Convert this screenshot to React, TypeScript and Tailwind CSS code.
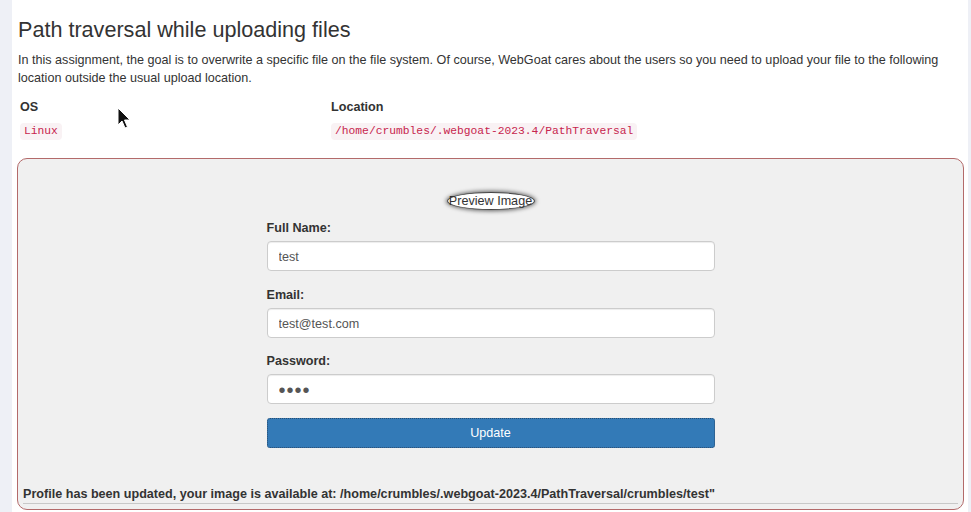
import React from "react";

export default function App() {
  const font = { fontFamily: '"Liberation Sans", Arial, sans-serif' };
  return (
    <div className="relative flex w-[971px] h-[512px] overflow-hidden text-[#333]" style={font}>
      <div className="w-[12px] bg-[#eef0f6] shrink-0" />
      <div className="flex-1 bg-white pl-[5px] pr-[4px] pt-[18px] flex flex-col">
        <h3 className="pl-[1px] text-[21.6px] leading-[24px] font-normal">Path traversal while uploading files</h3>
        <p className="pl-[1px] mt-[9px] text-[12.6px] leading-[18px] pr-[6px]">
          In this assignment, the goal is to overwrite a specific file on the file system. Of course, WebGoat cares about the users so you need to upload your file to the following location outside the usual upload location.
        </p>
        <div className="mt-[10px] pl-[3px] flex text-[12.6px]">
          <div className="w-[311px] flex flex-col">
            <div className="font-bold leading-[20px]">OS</div>
            <div className="mt-[4px] h-[20px] flex items-center">
              <code className="bg-[#f9f2f4] text-[#c7254e] rounded-[4px] px-[4px] py-[1px] text-[11.3px] leading-[15px]" style={{ fontFamily: '"Liberation Mono", monospace' }}>Linux</code>
            </div>
          </div>
          <div className="flex flex-col">
            <div className="font-bold leading-[20px]">Location</div>
            <div className="mt-[4px] h-[20px] flex items-center">
              <code className="bg-[#f9f2f4] text-[#c7254e] rounded-[4px] px-[4px] py-[1px] text-[11.3px] leading-[15px]" style={{ fontFamily: '"Liberation Mono", monospace' }}>/home/crumbles/.webgoat-2023.4/PathTraversal</code>
            </div>
          </div>
        </div>
        <div className="mt-[17px] h-[352px] border border-[#b36a6a] rounded-[10px] bg-[#f0f0f0] px-[5px] flex flex-col">
          <div className="flex justify-center mt-[33px]">
            <div className="w-[88px] h-[18px] rounded-[50%] bg-white border border-[#444] shadow-[0_0_4px_1px_rgba(0,0,0,0.6)] flex items-center justify-center text-[12.6px] leading-[16px] text-[#333]">
              Preview Image
            </div>
          </div>
          <div className="w-[448px] mx-auto mt-[9px] flex flex-col">
            <label className="text-[12.6px] font-bold leading-[19px] mb-[3px]">Full Name:</label>
            <input readOnly value="test" className="h-[30px] bg-white border border-[#ccc] rounded-[4px] px-[11px] pt-[2px] text-[12.6px] text-[#555] shadow-[inset_0_1px_1px_rgba(0,0,0,0.075)] outline-none" style={font} />
            <label className="mt-[15px] text-[12.6px] font-bold leading-[19px] mb-[3px]">Email:</label>
            <input readOnly value="test@test.com" className="h-[30px] bg-white border border-[#ccc] rounded-[4px] px-[11px] pt-[2px] text-[12.6px] text-[#555] shadow-[inset_0_1px_1px_rgba(0,0,0,0.075)] outline-none" style={font} />
            <label className="mt-[14px] text-[12.6px] font-bold leading-[19px] mb-[3px]">Password:</label>
            <input readOnly type="password" value="test" className="h-[30px] bg-white border border-[#ccc] rounded-[4px] px-[11px] pt-[1px] text-[20px] tracking-[1px] text-[#555] shadow-[inset_0_1px_1px_rgba(0,0,0,0.075)] outline-none" style={font} />
            <button className="mt-[14px] h-[30px] bg-[#337ab7] text-white text-[12.6px] pt-[1px] rounded-[3px] border border-dotted border-[#2a4d70]" style={font}>
              Update
            </button>
          </div>
          <div className="mt-[37px] text-[12.6px] font-bold leading-[18px] border-b border-[#c8c8c8]">
            Profile has been updated, your image is available at: /home/crumbles/.webgoat-2023.4/PathTraversal/crumbles/test"
          </div>
        </div>
      </div>
      <div className="w-[3px] bg-[#eef0f6] shrink-0" />
      <svg className="absolute left-[117px] top-[107px]" width="15" height="23" viewBox="0 0 15 23">
        <path d="M1 1 L1 18 L5 14 L8 21 L10.5 20 L7.5 13 L13 13 Z" fill="#111" stroke="#fff" strokeWidth="1" />
      </svg>
    </div>
  );
}
